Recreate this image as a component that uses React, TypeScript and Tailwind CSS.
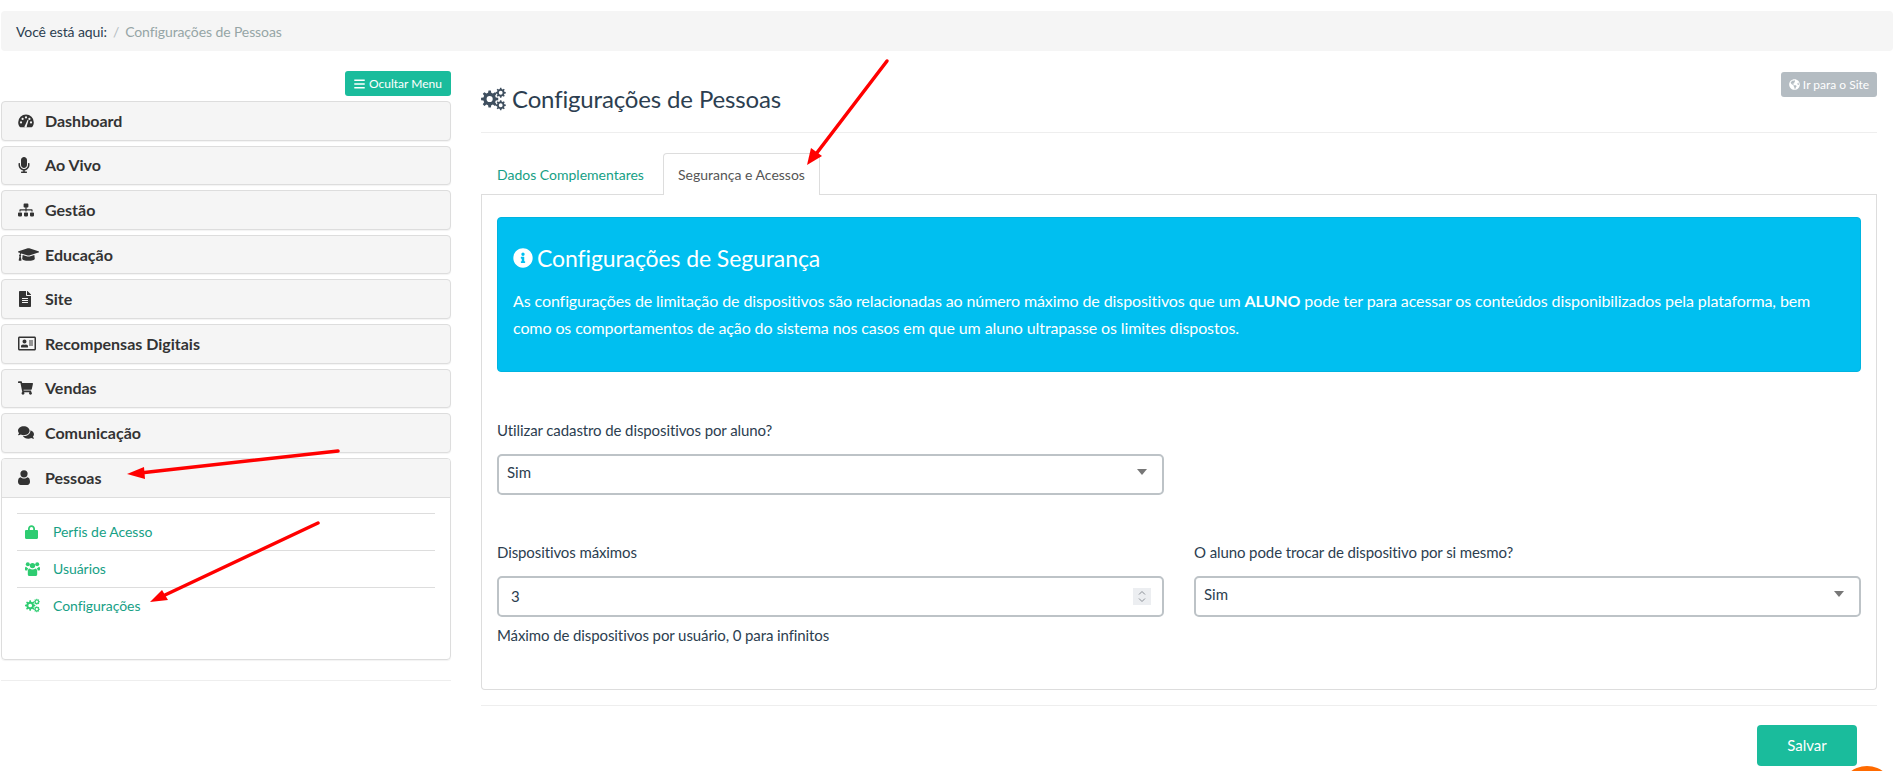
import type { ReactNode } from "react";
import {
  FaBars,
  FaComments,
  FaFileAlt,
  FaGlobeAmericas,
  FaGraduationCap,
  FaInfoCircle,
  FaMicrophone,
  FaRegAddressCard,
  FaShoppingCart,
  FaSitemap,
} from "react-icons/fa";

// outline of a cog with a hole in the middle, for the font-awesome 4 style "cogs" icon
function gearPath(cx: number, cy: number, r: number, teeth: number, hole: number) {
  const pts: string[] = [];
  const step = (Math.PI * 2) / teeth;
  const inner = r * 0.74;
  for (let i = 0; i < teeth; i++) {
    const a = i * step;
    const corners: [number, number][] = [
      [a - step * 0.32, inner],
      [a - step * 0.17, r],
      [a + step * 0.17, r],
      [a + step * 0.32, inner],
    ];
    for (const [t, d] of corners) {
      pts.push(`${(cx + Math.cos(t) * d).toFixed(2)} ${(cy + Math.sin(t) * d).toFixed(2)}`);
    }
  }
  const ring = `M${cx - hole} ${cy}a${hole} ${hole} 0 1 0 ${hole * 2} 0a${hole} ${hole} 0 1 0 ${-hole * 2} 0z`;
  return `M${pts.join("L")}z${ring}`;
}

function CogsIcon({ className }: { className?: string }) {
  return (
    <svg viewBox="0 0 26 24" className={className} fill="currentColor" fillRule="evenodd">
      <path d={gearPath(9, 12, 9, 8, 3.2)} />
      <path d={gearPath(20.5, 5.5, 5.3, 8, 2)} />
      <path d={gearPath(20.5, 18.5, 5.3, 8, 2)} />
    </svg>
  );
}

function DashboardIcon() {
  return (
    <svg viewBox="0 0 16 14" className="h-[14px] w-[16px]">
      <path
        fill="currentColor"
        d="M8 .5A7.8 7.8 0 0 0 .2 8.3c0 1.7.5 3.2 1.4 4.5.2.3.5.5.8.5h11.2c.3 0 .6-.2.8-.5.9-1.3 1.4-2.8 1.4-4.5A7.8 7.8 0 0 0 8 .5z"
      />
      <g fill="#f5f5f5">
        <circle cx="3" cy="8.4" r="1.1" />
        <circle cx="4.6" cy="4.9" r="1.1" />
        <circle cx="8" cy="3.4" r="1.1" />
        <circle cx="13" cy="8.4" r="1.1" />
        <circle cx="11.4" cy="4.9" r="1.1" />
        <path d="M7 11.4l2.6-5.6.9.4-1.7 5.8a1.2 1.2 0 1 1-1.8-.6z" />
      </g>
    </svg>
  );
}

function UserIcon() {
  return (
    <svg viewBox="0 0 12 15" className="h-[15px] w-[12px]" fill="currentColor">
      <circle cx="6" cy="3.8" r="3.6" />
      <path d="M2.6 7.2C3.5 8 4.7 8.5 6 8.5s2.5-.5 3.4-1.3c1.7.2 2.6 1.9 2.6 4.6 0 1.9-1.1 3.2-2.7 3.2H2.7C1.1 15 0 13.7 0 11.8c0-2.7.9-4.4 2.6-4.6z" />
    </svg>
  );
}

function LockIcon() {
  return (
    <svg viewBox="0 0 13 14" className="h-[14px] w-[13px]" fill="currentColor">
      <path d="M3 5V3.8C3 1.7 4.5.2 6.5.2S10 1.7 10 3.8V5h1.8c.7 0 1.2.5 1.2 1.2v6.6c0 .7-.5 1.2-1.2 1.2H1.2C.5 14 0 13.5 0 12.8V6.2C0 5.5.5 5 1.2 5zm1.8 0h3.4V3.8c0-1-.7-1.8-1.7-1.8s-1.7.8-1.7 1.8z" />
    </svg>
  );
}

function UsersIcon() {
  return (
    <svg viewBox="0 0 15 14" className="h-[14px] w-[15px]" fill="currentColor">
      <circle cx="2.8" cy="2.3" r="2" />
      <circle cx="12.2" cy="2.3" r="2" />
      <circle cx="7.5" cy="3.6" r="2.7" />
      <path d="M0 6.2c0-1 .6-1.5 1.2-1.5.4.8 1.2 1.3 2 1.4-.5.7-.8 1.5-.8 2.500H1C.3 8.600 0 8 0 7.300zM15 6.200c0-1-.6-1.500-1.200-1.500-.4.800-1.200 1.300-2 1.400.5.700.8 1.500.8 2.500H14c.7 0 1-.6 1-1.300z" />
      <path d="M4.500 6.400c.8.700 1.900 1.100 3 1.100s2.200-.4 3-1.100c1.100.2 1.700 1.300 1.700 3.400v2.400c0 1-.6 1.800-1.600 1.800H4.400c-1 0-1.600-.8-1.600-1.800V9.800c0-2.100.6-3.200 1.700-3.400z" />
    </svg>
  );
}

const MENU: { label: string; icon: ReactNode }[] = [
  { label: "Dashboard", icon: <DashboardIcon /> },
  { label: "Ao Vivo", icon: <FaMicrophone className="h-[16px] w-[12px]" /> },
  { label: "Gestão", icon: <FaSitemap className="h-4 w-4" /> },
  { label: "Educação", icon: <FaGraduationCap className="h-[17px] w-[21px]" /> },
  { label: "Site", icon: <FaFileAlt className="h-[16px] w-[14px]" /> },
  { label: "Recompensas Digitais", icon: <FaRegAddressCard className="h-[17px] w-[18px]" /> },
  { label: "Vendas", icon: <FaShoppingCart className="h-[14px] w-[15px]" /> },
  { label: "Comunicação", icon: <FaComments className="h-[15px] w-[16px]" /> },
];

const SUBMENU: { label: string; icon: ReactNode }[] = [
  { label: "Perfis de Acesso", icon: <LockIcon /> },
  { label: "Usuários", icon: <UsersIcon /> },
  { label: "Configurações", icon: <CogsIcon className="h-[15px] w-[15px]" /> },
];

function MenuHeader({ label, icon }: { label: string; icon: ReactNode }) {
  return (
    <div className="flex h-[39.6px] items-center rounded-[4px] border border-[#ddd] bg-[#f5f5f5] pl-[16px] shadow-[0_1px_1px_rgba(0,0,0,0.05)]">
      <span className="flex w-[27px] shrink-0 text-[#333]">{icon}</span>
      <span className="text-[16px] font-bold text-[#333]">{label}</span>
    </div>
  );
}

function Sidebar() {
  return (
    <aside className="ml-[1px] w-[450px] shrink-0 pt-[20px]">
      <div className="mb-[5px] flex justify-end">
        <button className="flex h-[25px] w-[106px] items-center justify-center gap-[4px] rounded-[3px] bg-[#1abc9c] text-[12px] text-white">
          <FaBars className="h-[12px] w-[11px]" />
          Ocultar Menu
        </button>
      </div>
      <div className="flex flex-col gap-[5px]">
        {MENU.map((item) => (
          <MenuHeader key={item.label} {...item} />
        ))}
        <div className="h-[202px] overflow-hidden rounded-[4px] border border-[#ddd] shadow-[0_1px_1px_rgba(0,0,0,0.05)]">
          <div className="flex h-[39px] items-center border-b border-[#ddd] bg-[#f5f5f5] pl-[16px]">
            <span className="flex w-[27px] shrink-0 text-[#333]">
              <UserIcon />
            </span>
            <span className="text-[16px] font-bold text-[#333]">Pessoas</span>
          </div>
          <ul className="mx-[15px] mt-[15px]">
            {SUBMENU.map((item) => (
              <li key={item.label} className="flex h-[37px] items-center border-t border-[#ddd] pl-[8px]">
                <span className="flex w-[28px] shrink-0 text-[#2ecc71]">{item.icon}</span>
                <span className="text-[14px] tracking-[-0.05px] text-[#16a085]">{item.label}</span>
              </li>
            ))}
          </ul>
        </div>
      </div>
      <hr className="mt-[20px] border-[#eee]" />
    </aside>
  );
}

function Field({ label, children, help }: { label: string; children: ReactNode; help?: string }) {
  return (
    <div className="w-[667px]">
      <div className="mb-[14px] text-[15px] leading-[20px] tracking-[-0.1px] text-[#2c3e50]">{label}</div>
      {children}
      {help && <div className="mt-[8px] text-[15px] leading-[20px] tracking-[-0.1px] text-[#2c3e50]">{help}</div>}
    </div>
  );
}

function SelectBox() {
  return (
    <div className="flex h-[41px] items-center justify-between rounded-[5px] border-2 border-[#bdc3c7] pb-[5px] pl-[8px] pr-[15px] text-[15px] text-[#2c3e50]">
      <span>Sim</span>
      <svg width="10" height="6" viewBox="0 0 10 6" className="fill-[#777]">
        <path d="M0 0h10L5 6z" />
      </svg>
    </div>
  );
}

function NumberBox() {
  return (
    <div className="relative">
      <input
        type="number"
        defaultValue={3}
        className="h-[41px] w-full rounded-[5px] border-2 border-[#bdc3c7] pb-[2px] pl-[12px] pr-[12px] text-[15px] text-[#2c3e50] outline-none [appearance:textfield] [&::-webkit-inner-spin-button]:appearance-none"
      />
      <span className="absolute right-[13px] top-[12px] flex h-[17px] w-[18px] items-center justify-center bg-[#eceef1]">
        <svg width="8" height="13" viewBox="0 0 8 13" fill="none" stroke="#8a8f96" strokeWidth="1">
          <path d="M1 4.5L4 1.5L7 4.5" />
          <path d="M1 8.5L4 11.5L7 8.5" />
        </svg>
      </span>
    </div>
  );
}

function Content() {
  return (
    <main className="ml-[30px] w-[1396px] shrink-0">
      <div className="flex h-[82px] items-start justify-between border-b border-[#eee] pt-[21px]">
        <h1 className="mt-[8px] flex h-[38px] items-center gap-[6px] text-[24px] font-normal tracking-[-0.15px] text-[#2c3e50]">
          <CogsIcon className="h-[24px] w-[25px] text-[#3f4f5f]" />
          Configurações de Pessoas
        </h1>
        <button className="flex h-[25px] w-[96px] items-center justify-center gap-[3px] rounded-[3px] bg-[#b4bcc2] text-[12px] text-white">
          <FaGlobeAmericas className="h-[11px] w-[11px]" />
          Ir para o Site
        </button>
      </div>

      <div className="relative mt-[20px] flex h-[42px]">
        <div className="flex w-[182px] items-center pl-[16px] text-[14px] text-[#16a085]">Dados Complementares</div>
        <div className="z-10 flex h-[42px] w-[157px] items-center justify-center rounded-t-[4px] border border-b-0 border-[#ddd] bg-white text-[14px] text-[#555]">
          Segurança e Acessos
        </div>
        <div className="absolute bottom-0 left-0 right-0 border-b border-[#ddd]" />
      </div>

      <section className="h-[495px] rounded-b-[4px] border border-t-0 border-[#ddd] px-[15px] pt-[22px]">
        <div className="h-[155px] rounded-[4px] border border-[#00b4e0] bg-[#00bff0] px-[15px] pt-[24px] text-white">
          <h2 className="flex items-center gap-[4px] text-[23px] font-normal leading-[32px] tracking-[-0.1px]">
            <FaInfoCircle className="h-[20px] w-[20px]" />
            Configurações de Segurança
          </h2>
          <p className="mt-[13px] text-[16px] leading-[27px] tracking-[-0.1px]">
            As configurações de limitação de dispositivos são relacionadas ao número máximo de dispositivos que um{" "}
            <b>ALUNO</b> pode ter para acessar os conteúdos disponibilizados pela plataforma, bem como os comportamentos
            de ação do sistema nos casos em que um aluno ultrapasse os limites dispostos.
          </p>
        </div>

        <div className="mt-[48px]">
          <Field label="Utilizar cadastro de dispositivos por aluno?">
            <SelectBox />
          </Field>
        </div>

        <div className="mt-[47px] flex gap-[30px]">
          <Field label="Dispositivos máximos" help="Máximo de dispositivos por usuário, 0 para infinitos">
            <NumberBox />
          </Field>
          <Field label="O aluno pode trocar de dispositivo por si mesmo?">
            <SelectBox />
          </Field>
        </div>
      </section>

      <hr className="mt-[15px] border-[#eee]" />
      <div className="mt-[19px] flex justify-end pr-[20px]">
        <button className="h-[41px] w-[100px] rounded-[4px] bg-[#1abc9c] text-[15px] text-white">Salvar</button>
      </div>
    </main>
  );
}

export default function App() {
  return (
    <div className="relative h-[771px] w-[1893px] overflow-hidden bg-white font-['Lato','Noto_Sans',sans-serif]">
      <div className="ml-[1px] mt-[11px] flex h-[40px] items-center rounded-[4px] bg-[#f5f5f5] px-[15px] text-[14px] tracking-[-0.1px]">
        <span className="text-[#2c3e50]">Você está aqui:</span>
        <span className="px-[6px] text-[#b4bcc2]">/</span>
        <span className="text-[#95a5a6]">Configurações de Pessoas</span>
      </div>

      <div className="flex">
        <Sidebar />
        <Content />
      </div>

      {/* chat bubble, cut off by the bottom of the window */}
      <div className="absolute left-[1840px] top-[766px] h-[54px] w-[54px] rounded-full bg-[#ff6a00]" />

      {/* red annotation arrows drawn over the screenshot */}
      <svg className="pointer-events-none absolute inset-0 z-20" width="1893" height="771">
        <g stroke="#ff0000" strokeWidth="3.5" strokeLinecap="round" fill="none">
          <path d="M338 451L140 473" />
          <path d="M318 523L165 595" />
          <path d="M887 61L816 154" />
        </g>
        <g fill="#ff0000">
          <path d="M127 474L144 467L145 479z" />
          <path d="M150 602L162 590L168 600z" />
          <path d="M807 165L811 148L822 156z" />
        </g>
      </svg>
    </div>
  );
}
